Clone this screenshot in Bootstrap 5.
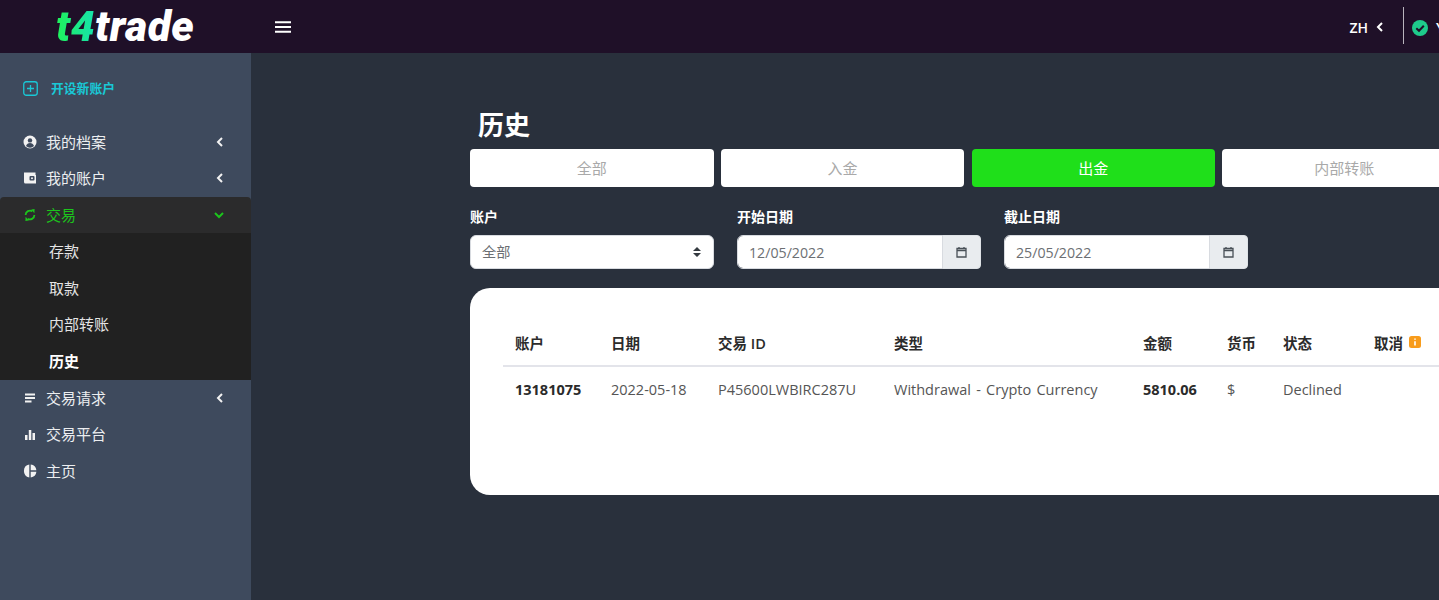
<!DOCTYPE html>
<html lang="zh">
<head>
<meta charset="UTF-8" />
<meta name="viewport" content="width=device-width, initial-scale=1.0" />
<title>历史</title>
<link href="https://cdn.jsdelivr.net/npm/bootstrap@5.3.3/dist/css/bootstrap.min.css" rel="stylesheet" />
<style>
  html, body { height: 100%; }
  body {
    font-family: "Open Sans", "Noto Sans CJK SC", sans-serif;
    font-size: 14.5px;
    background-color: #29303c;
    overflow: hidden;
    width: 1439px;
  }
  /* header */
  .top-bar { height: 53px; background-color: #1f1028; color: #fff; overflow: hidden; }
  .logo-box { width: 251px; padding-left: 56px; }
  .logo-text {
    font-family: "Roboto", sans-serif; font-weight: 900; font-style: italic;
    font-size: 42.5px; line-height: 53px; letter-spacing: .5px; color: #fff;
  }
  .logo-text span {
    background: linear-gradient(90deg, #1ff25a, #17e2ad);
    -webkit-background-clip: text; background-clip: text; color: transparent;
  }
  .burger { width: 16px; margin-left: 24px; }
  .lang-box { margin-left: auto; font-weight: 600; font-size: 14px; padding-top: 1px; }
  .top-divider { width: 1px; height: 37px; background-color: #b9b4bd; margin: 0 8px 0 19px; position: relative; top: -1px; }
  .user-box { width: 27px; overflow: hidden; flex-shrink: 0; white-space: nowrap; font-weight: 600; margin-top: 2px; }
  /* sidebar */
  .main-wrap { height: 547px; }
  .side-bar { width: 251px; flex-shrink: 0; background-color: #3e4a5d; color: #e9ecef; }
  .new-account { height: 70.5px; padding-left: 23px; color: #19c8d6; font-weight: 600; font-size: 12.8px; gap: 13px; }
  .side-item { height: 36.5px; padding: 0 24px 0 23px; color: #eceef0; gap: 9px; font-size: 15px; }
  .side-item svg.menu-ico { width: 14px; height: 14px; flex-shrink: 0; }
  .side-item .arrow { margin-left: auto; margin-right: 3px; }
  .side-item.is-open { background-color: #2b2b2c; color: #1cc41c; border-radius: 4px 4px 0 0; }
  .side-sub { background-color: #212121; font-size: 15px; }
  .side-sub div { height: 36.7px; padding-left: 49px; display: flex; align-items: center; color: #e4e4e4; }
  .side-sub .is-current { font-weight: 700; color: #fff; }
  /* content */
  .content-area { padding: 55px 0 0 219px; width: 1188px; flex-shrink: 0; }
  .page-title { font-size: 26px; font-weight: 700; color: #fff; margin: 0 0 7px 8px; line-height: 34px; }
  .tab-row { display: flex; gap: 7.3px; width: 999px; }
  .tab-btn {
    flex: 0 0 243.5px; height: 38px; background-color: #fff; color: #a9a9a9; border: 0;
    border-radius: 4px; font-size: 15px; padding: 0;
  }
  .tab-btn.is-active { background-color: #1fdf1a; color: #fff; }
  .filter-row { display: flex; gap: 23px; margin-top: 20px; }
  .filter-col { width: 244px; }
  .filter-col label { display: block; color: #fff; font-weight: 700; font-size: 14px; line-height: 20px; margin-bottom: 8px; }
  .filter-col .form-select, .filter-col .form-control {
    height: 34px; font-size: 14.2px; color: #6c6f73; padding: 0 11px; border-color: #d8dbe0;
    font-family: inherit;
  }
  .filter-col .form-select {
    background-image: url("data:image/svg+xml,%3csvg xmlns='http://www.w3.org/2000/svg' viewBox='0 0 8 10'%3e%3cpath fill='%23343a40' d='M4 0 8 4H0zM4 10 0 6h8z'/%3e%3c/svg%3e");
    background-size: 8px 10px; background-position: right 12px center;
  }
  .filter-col .form-control { background-color: #fff; }
  .filter-col .input-group-text { width: 39px; padding: 0; justify-content: center; background-color: #e9ecef; border-radius: 0 4px 4px 0; }
  .table-panel {
    margin-top: 19px; width: 1010px; height: 207px; background-color: #fff;
    border-radius: 20px; padding: 35px 0 0 33px;
  }
  .history-table { table-layout: fixed; width: 960px; margin: 0; color: #555; }
  .history-table th { color: #2b2b2b; font-weight: 600; padding: 0 12px; height: 43px; vertical-align: middle; border-bottom: 2px solid #e3e4ea; }
  .history-table td { padding: 0 12px; height: 46px; vertical-align: middle; color: #555; border: 0; word-spacing: 1.5px; }
  .history-table .strong-cell { font-weight: 700; color: #2b2b2b; }
  .col-acct { width: 96px; } .col-date { width: 107px; } .col-id { width: 176px; } .col-type { width: 249px; }
  .col-amt { width: 84px; } .col-cur { width: 56px; } .col-stat { width: 91px; }
  .info-mark { display: inline-flex; vertical-align: 1px; margin-left: 2px; }
</style>
</head>
<body>
  <!-- Header -->
  <div class="top-bar d-flex align-items-center">
    <div class="logo-box"><div class="logo-text"><span>t4</span>trade</div></div>
    <svg class="burger" viewBox="0 0 16 12" height="12"><path d="M0 1.2h16M0 6h16M0 10.8h16" stroke="#fff" stroke-width="2"/></svg>
    <div class="lang-box d-flex align-items-center gap-2">ZH
      <svg width="8" height="10" viewBox="0 0 8 10"><path d="M6 1 2 5l4 4" fill="none" stroke="#fff" stroke-width="2"/></svg>
    </div>
    <div class="top-divider"></div>
    <div class="user-box d-flex align-items-center gap-2">
      <svg width="16" height="16" viewBox="0 0 16 16" class="flex-shrink-0"><circle cx="8" cy="8" r="8" fill="#1ecb8b"/><path d="M4.3 8.2 7 10.8l4.8-5" fill="none" stroke="#1f1028" stroke-width="2"/></svg>
      <span>YU</span>
    </div>
  </div>

  <div class="main-wrap d-flex">
    <!-- Sidebar -->
    <div class="side-bar">
      <div class="new-account d-flex align-items-center">
        <svg width="15" height="15" viewBox="0 0 15 15"><rect x=".75" y=".75" width="13.5" height="13.5" rx="2.5" fill="none" stroke="#19c8d6" stroke-width="1.3"/><path d="M7.5 4v7M4 7.5h7" stroke="#19c8d6" stroke-width="1.3"/></svg>
        <span>开设新账户</span>
      </div>
      <div class="side-item d-flex align-items-center">
        <svg class="menu-ico" viewBox="0 0 14 14"><circle cx="7" cy="7" r="6.5" fill="#f2f2f2"/><circle cx="7" cy="5.4" r="2.2" fill="#3e4a5d"/><path d="M3 11c.6-2 2.2-3 4-3s3.400 1 4 3a5.500 5.500 0 0 1-8 0z" fill="#3e4a5d"/></svg>
        <span>我的档案</span>
        <svg class="arrow" width="8" height="10" viewBox="0 0 8 10"><path d="M6 1 2 5l4 4" fill="none" stroke="#f2f2f2" stroke-width="2"/></svg>
      </div>
      <div class="side-item d-flex align-items-center">
        <svg class="menu-ico" viewBox="0 0 14 14"><path d="M1 1.500h11.500V4H13v8.500H2.500A1.500 1.500 0 0 1 1 11z" fill="#f2f2f2"/><rect x="6.500" y="5" width="5" height="4.500" rx="1" fill="#3e4a5d"/><circle cx="9" cy="7.200" r="1" fill="#f2f2f2"/></svg>
        <span>我的账户</span>
        <svg class="arrow" width="8" height="10" viewBox="0 0 8 10"><path d="M6 1 2 5l4 4" fill="none" stroke="#f2f2f2" stroke-width="2"/></svg>
      </div>
      <div class="side-item is-open d-flex align-items-center">
        <svg class="menu-ico" viewBox="0 0 14 14"><path d="M2.600 7a4.400 4.400 0 0 1 6.800-3.700M11.400 7a4.400 4.400 0 0 1-6.800 3.700" fill="none" stroke="#1cc41c" stroke-width="1.800"/><path d="M8.200 1.500 11.600 1l-.2 4.200zM5.800 12.500 2.400 13l.2-4.200z" fill="#1cc41c"/></svg>
        <span>交易</span>
        <svg class="arrow" width="10" height="8" viewBox="0 0 10 8"><path d="M1 2l4 4 4-4" fill="none" stroke="#1cc41c" stroke-width="2"/></svg>
      </div>
      <div class="side-sub">
        <div>存款</div>
        <div>取款</div>
        <div>内部转账</div>
        <div class="is-current">历史</div>
      </div>
      <div class="side-item d-flex align-items-center">
        <svg class="menu-ico" viewBox="0 0 14 14"><path d="M2 2.500h10v2H2zM2 6h10v2H2zM2 9.500h6.500v2H2z" fill="#f2f2f2"/></svg>
        <span>交易请求</span>
        <svg class="arrow" width="8" height="10" viewBox="0 0 8 10"><path d="M6 1 2 5l4 4" fill="none" stroke="#f2f2f2" stroke-width="2"/></svg>
      </div>
      <div class="side-item d-flex align-items-center">
        <svg class="menu-ico" viewBox="0 0 14 14"><path d="M2 7h2.500v5H2zM5.800 2h2.500v10H5.800zM9.500 5H12v7H9.500z" fill="#f2f2f2"/></svg>
        <span>交易平台</span>
      </div>
      <div class="side-item d-flex align-items-center">
        <svg class="menu-ico" viewBox="0 0 14 14"><path d="M6.300 .6v12.800a6.500 6.500 0 0 1 0-12.800zM7.700 .6a6.500 6.500 0 0 1 5.700 5.700H7.700zM7.700 7.700h5.700a6.500 6.500 0 0 1-5.700 5.700z" fill="#f2f2f2"/></svg>
        <span>主页</span>
      </div>
    </div>

    <!-- Content -->
    <div class="content-area">
      <h1 class="page-title">历史</h1>
      <div class="tab-row">
        <button class="tab-btn">全部</button>
        <button class="tab-btn">入金</button>
        <button class="tab-btn is-active">出金</button>
        <button class="tab-btn">内部转账</button>
      </div>

      <div class="filter-row">
        <div class="filter-col">
          <label>账户</label>
          <select class="form-select"><option>全部</option></select>
        </div>
        <div class="filter-col">
          <label>开始日期</label>
          <div class="input-group">
            <input class="form-control" type="text" value="12/05/2022" />
            <span class="input-group-text">
              <svg width="11" height="12" viewBox="0 0 11 12"><path d="M1 2.500h9v8.500H1zM1 4.500h9" fill="none" stroke="#495057" stroke-width="1.300"/><path d="M3 1v2M8 1v2" stroke="#495057" stroke-width="1.300"/></svg>
            </span>
          </div>
        </div>
        <div class="filter-col">
          <label>截止日期</label>
          <div class="input-group">
            <input class="form-control" type="text" value="25/05/2022" />
            <span class="input-group-text">
              <svg width="11" height="12" viewBox="0 0 11 12"><path d="M1 2.500h9v8.500H1zM1 4.500h9" fill="none" stroke="#495057" stroke-width="1.300"/><path d="M3 1v2M8 1v2" stroke="#495057" stroke-width="1.300"/></svg>
            </span>
          </div>
        </div>
      </div>

      <div class="table-panel">
        <table class="table history-table">
          <thead>
            <tr>
              <th class="col-acct">账户</th>
              <th class="col-date">日期</th>
              <th class="col-id">交易 ID</th>
              <th class="col-type">类型</th>
              <th class="col-amt">金额</th>
              <th class="col-cur">货币</th>
              <th class="col-stat">状态</th>
              <th>取消
                <span class="info-mark"><svg width="12" height="12" viewBox="0 0 12 12"><rect width="12" height="12" rx="2.500" fill="#f89c1c"/><path d="M6 2.500v1.300M6 5.200v4.300" stroke="#fff" stroke-width="1.600"/></svg></span>
              </th>
            </tr>
          </thead>
          <tbody>
            <tr>
              <td class="strong-cell">13181075</td>
              <td>2022-05-18</td>
              <td>P45600LWBIRC287U</td>
              <td>Withdrawal - Crypto Currency</td>
              <td class="strong-cell">5810.06</td>
              <td>$</td>
              <td>Declined</td>
              <td></td>
            </tr>
          </tbody>
        </table>
      </div>
    </div>
  </div>
  <script src="https://cdn.jsdelivr.net/npm/bootstrap@5.3.3/dist/js/bootstrap.bundle.min.js"></script>
</body>
</html>
